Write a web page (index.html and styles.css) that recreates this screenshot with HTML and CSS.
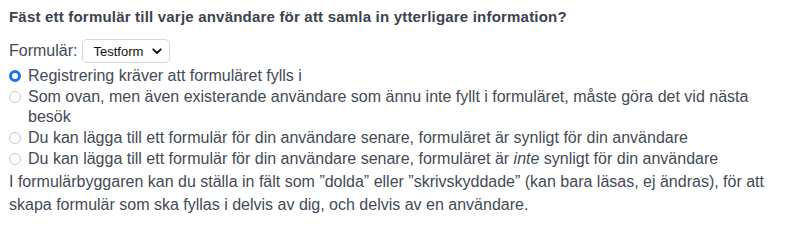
FILE: index.html
```html
<!DOCTYPE html>
<html lang="sv">
<head>
<meta charset="utf-8">
<link rel="stylesheet" href="styles.css">
</head>
<body>
<div class="panel">
  <h3 class="title">Fäst ett formulär till varje användare för att samla in ytterligare information?</h3>
  <div class="form-row">
    <label class="form-label">Formulär:</label>
    <span class="select">Testform<svg class="chev" viewBox="0 0 10 7" width="10" height="7"><path d="M1.2 1.3 L5 5 L8.8 1.3" fill="none" stroke="#111" stroke-width="1.8" stroke-linecap="round" stroke-linejoin="round"/></svg></span>
  </div>
  <ul class="options">
    <li class="opt"><span class="radio checked"></span><span class="opt-text">Registrering kräver att formuläret fylls i</span></li>
    <li class="opt"><span class="radio"></span><span class="opt-text">Som ovan, men även existerande användare som ännu inte fyllt i formuläret, måste göra det vid nästa besök</span></li>
    <li class="opt"><span class="radio"></span><span class="opt-text">Du kan lägga till ett formulär för din användare senare, formuläret är synligt för din användare</span></li>
    <li class="opt"><span class="radio"></span><span class="opt-text">Du kan lägga till ett formulär för din användare senare, formuläret är <em>inte</em> synligt för din användare</span></li>
  </ul>
  <p class="note">I formulärbyggaren kan du ställa in fält som ”dolda” eller ”skrivskyddade” (kan bara läsas, ej ändras), för att skapa formulär som ska fyllas i delvis av dig, och delvis av en användare.</p>
</div>
</body>
</html>
```
FILE: styles.css
```css
html, body { margin: 0; background: #fff; }
body {
  font-family: "Liberation Sans", Arial, sans-serif;
  color: #434a56;
  font-size: 16px;
}
.panel { padding: 8px 9px 0 9px; width: 780px; box-sizing: border-box; }
.title {
  margin: 0 0 13px 0;
  font-size: 15px;
  letter-spacing: 0.2px;
  font-weight: bold;
  color: #3b4250;
  line-height: 18px;
}
.form-row { display: flex; align-items: center; gap: 5px; height: 24px; margin-bottom: 3px; }
.form-label { line-height: 20px; }
.select {
  display: inline-flex; align-items: center; gap: 9px;
  height: 24px; box-sizing: border-box;
  padding: 0 7px 0 10px;
  border: 1px solid #d6d6d6; border-radius: 5px;
  font-size: 13px; color: #111;
  background: #fff;
}
.chev { display: block; }
.options { list-style: none; margin: 0; padding: 0; }
.opt { display: flex; align-items: flex-start; gap: 7px; line-height: 19.5px; margin-bottom: 1.5px; }
.radio {
  flex: none; width: 12px; height: 12px; box-sizing: border-box;
  border: 1px solid #c9c9c9; border-radius: 50%;
  margin-top: 4px; background: #fff;
}
.radio.checked { border: 3.5px solid #1b74e8; }
.opt-text { flex: 1; }
.note { margin: 0; line-height: 23px; }
```
